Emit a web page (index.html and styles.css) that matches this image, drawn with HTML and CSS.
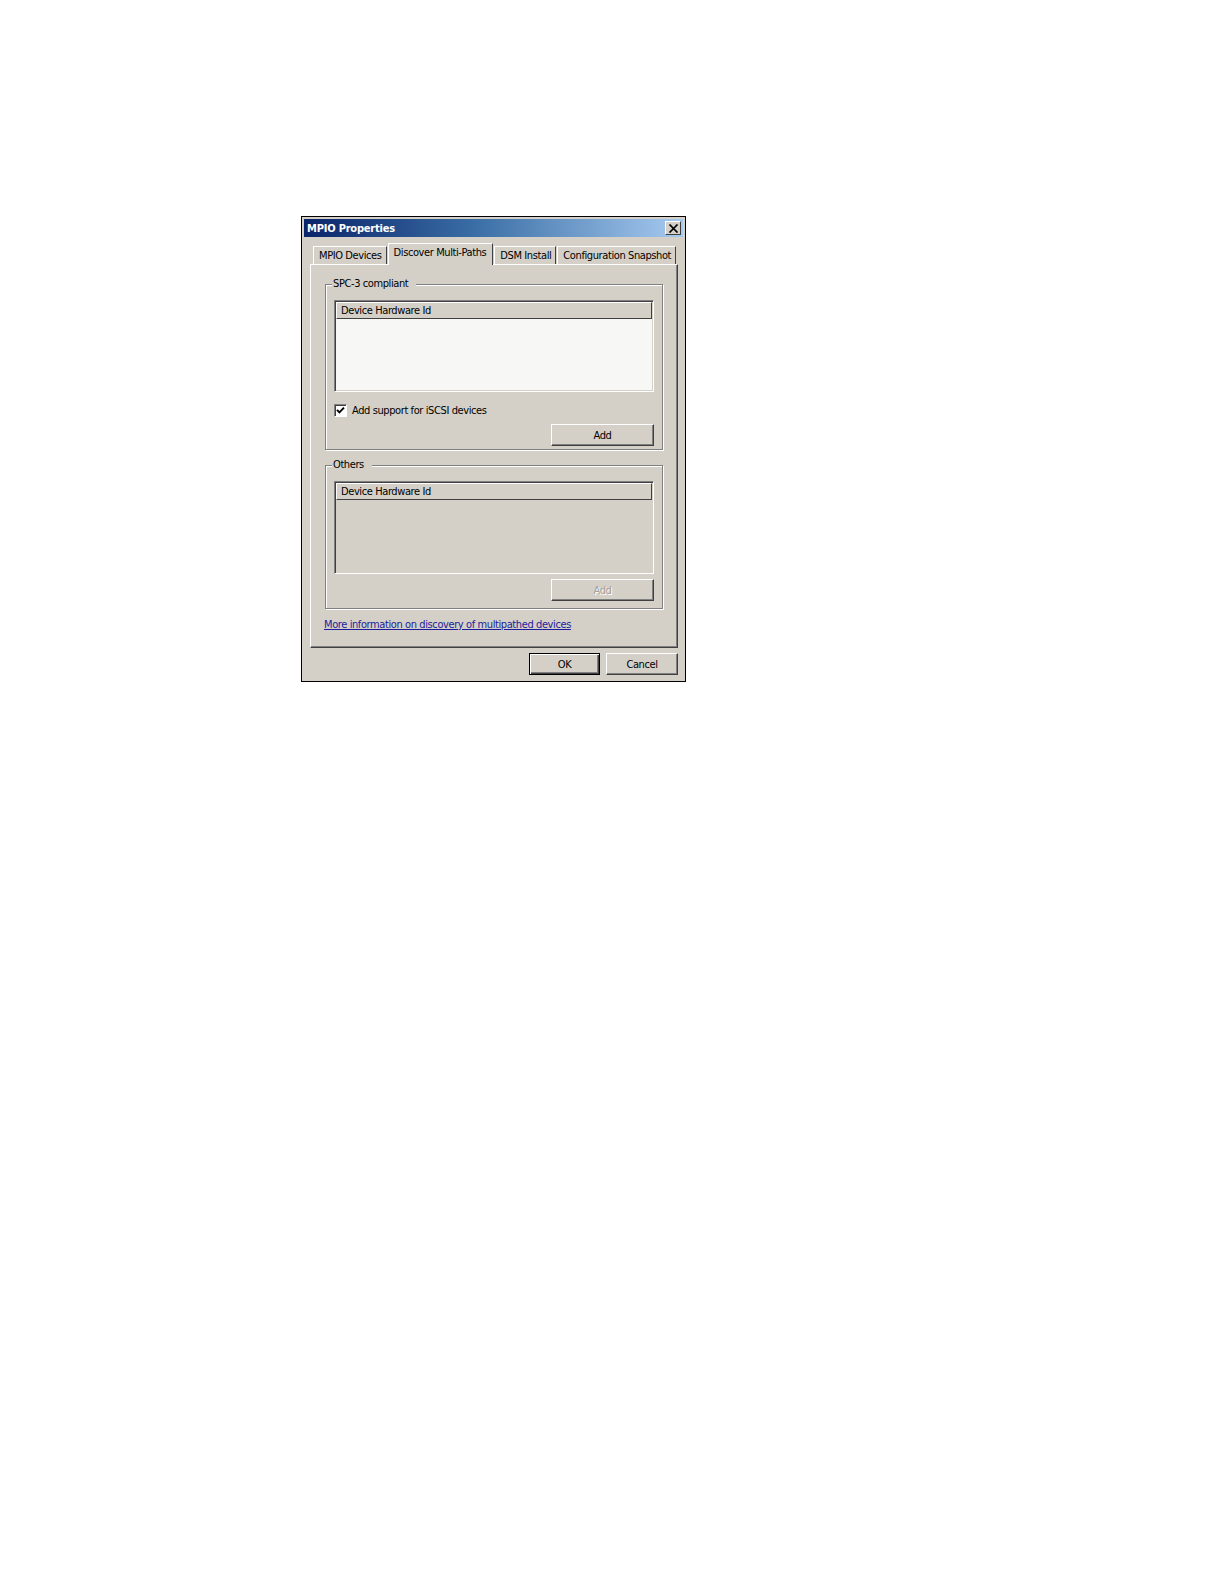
FILE: index.html
```html
<!DOCTYPE html>
<html>
<head>
<meta charset="utf-8">
<link rel="stylesheet" href="styles.css">
</head>
<body>
<div class="dialog">
  <div class="titlebar">
    <span class="title">MPIO Properties</span>
    <span class="close"><svg width="11" height="9" viewBox="0 0 11 9"><path d="M1.5 0.5 L9.5 8.5 M9.5 0.5 L1.5 8.5" stroke="#000" stroke-width="1.7" fill="none"/></svg></span>
  </div>
  <div class="tabs">
    <div class="tab first">MPIO Devices</div>
    <div class="tab active">Discover Multi-Paths</div>
    <div class="tab">DSM Install</div>
    <div class="tab">Configuration Snapshot</div>
  </div>
  <div class="panel">
    <div class="group">
      <div class="legend">SPC-3 compliant</div>
      <div class="listview">
        <div class="lv-header"><span>Device Hardware Id</span></div>
        <div class="lv-body"></div>
      </div>
      <label class="check"><span class="box"><svg width="9" height="9" viewBox="0 0 9 9"><path d="M1 3.8 L3.4 6.4 L8 1.6" stroke="#000" stroke-width="1.9" fill="none"/></svg></span>Add support for iSCSI devices</label>
      <div class="btn-row"><div class="btn">Add</div></div>
    </div>
    <div class="group g2">
      <div class="legend">Others</div>
      <div class="listview disabled">
        <div class="lv-header"><span>Device Hardware Id</span></div>
        <div class="lv-body"></div>
      </div>
      <div class="btn-row tight"><div class="btn dis">Add</div></div>
    </div>
    <a class="link" href="#">More information on discovery of multipathed devices</a>
  </div>
  <div class="footer">
    <div class="btn ok">OK</div>
    <div class="btn cancel">Cancel</div>
  </div>
</div>
</body>
</html>
```
FILE: styles.css
```css
html, body { margin: 0; padding: 0; background: #fff; }
body { font-family: "DejaVu Sans Condensed", "DejaVu Sans", sans-serif; font-size: 11px; letter-spacing: -0.4px; color: #000; }
.dialog {
  margin: 216px 0 0 301px;
  width: 383px;
  height: 464px;
  border: 1px solid #000;
  background: #d4d0c8;
  box-sizing: content-box;
  display: flex;
  flex-direction: column;
}
.titlebar {
  margin: 2px 2px 0 2px;
  height: 18px;
  background: linear-gradient(to right, #0a246a 0%, #3a6ea5 45%, #a6caf0 100%);
  display: flex;
  align-items: center;
  justify-content: space-between;
  padding: 0 2px 0 3px;
}
.title { color: #fff; font-weight: bold; font-size: 11px; letter-spacing: -0.2px; }
.close {
  width: 14px; height: 12px;
  background: #d4d0c8;
  border: 1px solid; border-color: #fff #404040 #404040 #fff;
  display: flex; align-items: center; justify-content: center;
}
.tabs {
  display: flex;
  margin: 7px 0 0 11px;
  height: 20px;
  align-items: flex-end;
  position: relative;
  z-index: 2;
}
.tab {
  height: 17px;
  line-height: 17px;
  padding: 0 4px 0 5px;
  border: 1px solid; border-bottom: none;
  border-color: #fff #404040 transparent #fff;
  margin-right: 1px;
  white-space: nowrap;
}
.tab.active {
  line-height: 18px;
  background: #d4d0c8;
  padding: 0 6px 0 5px;
  margin: 0 1px -1px 0;
  height: 21px;
}
.panel {
  margin: 0 7px 0 8px;
  height: 384px;
  border: 1px solid; border-color: #fff #404040 #404040 #fff;
  box-shadow: inset -1px -1px 0 #808080;
  padding: 19px 14px 0 14px;
  display: flex; flex-direction: column;
  box-sizing: border-box;
}
.group {
  position: relative;
  border: 1px solid #808080;
  box-shadow: 1px 1px 0 #fff, inset 1px 1px 0 #fff;
  padding: 15px 8px 4px 8px;
  height: 166px;
  box-sizing: border-box;
}
.g2 { margin-top: 15px; height: 144px; }
.legend {
  position: absolute; top: -8px; left: 6px;
  background: #d4d0c8; padding: 0 8px 0 1px;
}
.listview {
  border: 1px solid; border-color: #808080 #fff #fff #808080;
  box-shadow: inset 1px 1px 0 #404040, inset -1px -1px 0 #d4d0c8;
  height: 92px;
  background: #f7f7f5;
  box-sizing: border-box;
  padding: 1px;
  display: flex; flex-direction: column;
}
.listview.disabled { background: #d4d0c8; height: 93px; }
.lv-header {
  height: 17px;
  background: #d4d0c8;
  border: 1px solid; border-color: #fff #404040 #404040 #fff;
  box-sizing: border-box;
  padding-left: 4px;
  line-height: 15px;
}
.check { display: flex; align-items: center; margin-top: 12px; height: 13px; }
.box {
  width: 11px; height: 11px; background: #fff; margin-right: 5px;
  border: 1px solid; border-color: #808080 #fff #fff #808080;
  box-shadow: inset 1px 1px 0 #404040;
  display: flex; align-items: center; justify-content: center;
}
.btn-row { display: flex; justify-content: flex-end; margin-top: 7px; }
.btn-row.tight { margin-top: 5px; }
.btn {
  width: 103px; height: 22px;
  box-sizing: border-box;
  border: 1px solid; border-color: #fff #404040 #404040 #fff;
  box-shadow: inset -1px -1px 0 #808080;
  display: flex; align-items: center; justify-content: center;
}
.btn.dis { color: #a0a0a0; text-shadow: 1px 1px 0 #fff; }
.link { color: #1c1c9c; text-decoration: underline; margin-top: 9px; align-self: flex-start; margin-left: -1px; }
.footer { display: flex; justify-content: flex-end; gap: 6px; margin: 5px 7px 0 0; }
.btn.ok { width: 71px; border: 1px solid #000; box-shadow: inset 1px 1px 0 #fff, inset -1px -1px 0 #404040, inset -2px -2px 0 #808080; }
.btn.cancel { width: 72px; }
```
